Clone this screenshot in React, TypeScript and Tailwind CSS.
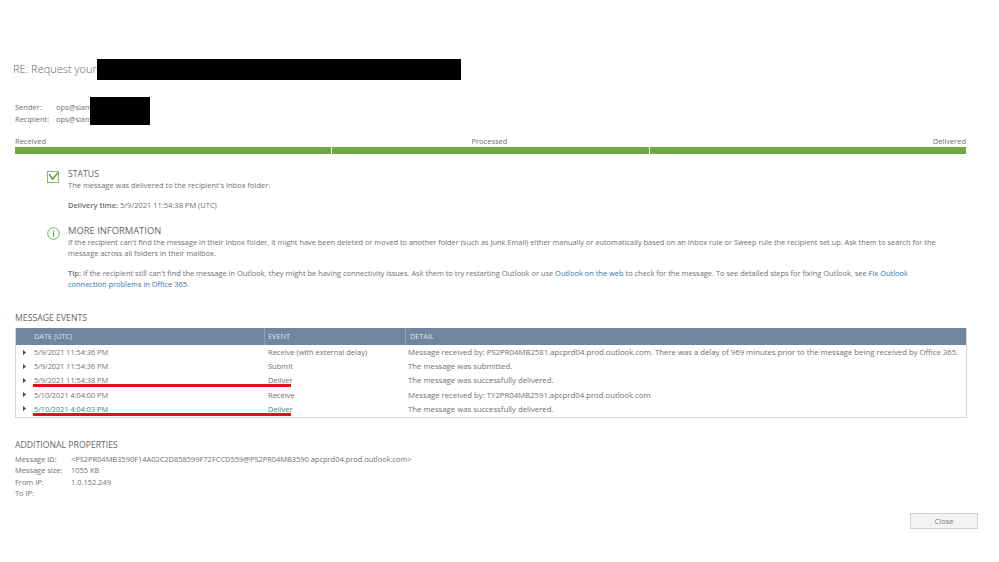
const font = { fontFamily: "'Open Sans', sans-serif" };

const events = [
  ["5/9/2021 11:54:36 PM", "Receive (with external delay)", "Message received by: PS2PR04MB2581.apcprd04.prod.outlook.com. There was a delay of 969 minutes prior to the message being received by Office 365.", false],
  ["5/9/2021 11:54:36 PM", "Submit", "The message was submitted.", false],
  ["5/9/2021 11:54:38 PM", "Deliver", "The message was successfully delivered.", true],
  ["5/10/2021 4:04:00 PM", "Receive", "Message received by: TY2PR04MB2591.apcprd04.prod.outlook.com", false],
  ["5/10/2021 4:04:03 PM", "Deliver", "The message was successfully delivered.", true],
] as const;

const props = [
  ["Message ID:", "<PS2PR04MB3590F14A02C2D858599F72FCCD559@PS2PR04MB3590.apcprd04.prod.outlook.com>"],
  ["Message size:", "1055 KB"],
  ["From IP:", "1.0.152.249"],
  ["To IP:", ""],
];

function CheckIcon() {
  return (
    <svg width="12" height="12" viewBox="0 0 12 12" fill="none" className="shrink-0">
      <rect x="0.5" y="0.5" width="11" height="11" stroke="#7db663" strokeWidth="0.9" />
      <path d="M2.2 3.2 L5.6 8.2 L11 1.6" stroke="#4f9a3a" strokeWidth="1.5" />
    </svg>
  );
}

function InfoIcon() {
  return (
    <svg width="13" height="13" viewBox="0 0 13 13" fill="none" className="shrink-0">
      <circle cx="6.5" cy="6.5" r="5.8" stroke="#6fae50" strokeWidth="1" />
      <rect x="6" y="5.6" width="1.1" height="4" fill="#4f9a3a" />
      <rect x="6" y="3.4" width="1.1" height="1.2" fill="#4f9a3a" />
    </svg>
  );
}

export default function App() {
  return (
    <div className="relative h-[562px] w-[999px] overflow-hidden bg-white pl-[15px] pr-[32px] pt-[59px] text-[7.5px] text-[#707070]" style={font}>
      <div className="-ml-[2px] flex h-[21px] items-center text-[11px] font-light text-[#666]">
        <span className="w-[84px] whitespace-nowrap">RE: Request your</span>
        <div className="h-[21px] w-[364px] bg-black" />
      </div>

      <div className="relative mt-[21px] leading-[12px]">
        <div className="flex h-[12px]">
          <span className="w-[41px]">Sender:</span>
          <span>ops@siam</span>
        </div>
        <div className="flex h-[12px]">
          <span className="w-[41px]">Recipient:</span>
          <span>ops@siam</span>
        </div>
        <div className="absolute left-[75px] top-[-4px] h-[28px] w-[60px] bg-black" />
      </div>

      <div className="mt-[11px] flex h-[10px] w-[951px] items-center justify-between leading-[10px]">
        <span>Received</span>
        <span>Processed</span>
        <span>Delivered</span>
      </div>
      <div className="mt-[1px] flex h-[7px] w-[951px] gap-px">
        <div className="flex-1 bg-[#6aa944]" />
        <div className="flex-1 bg-[#6aa944]" />
        <div className="flex-1 bg-[#6aa944]" />
      </div>

      <div className="mt-[14px] flex gap-[9px] pl-[32px]">
        <div className="pt-[3px]"><CheckIcon /></div>
        <div>
          <div className="h-[12px] text-[8.7px] leading-[12px] text-[#666]">STATUS</div>
          <div className="h-[11px] leading-[11px]">The message was delivered to the recipient's Inbox folder.</div>
          <div className="mt-[9px] h-[11px] leading-[11px]">
            <span className="font-semibold">Delivery time:</span> 5/9/2021 11:54:38 PM (UTC)
          </div>
        </div>
      </div>

      <div className="mt-[14px] flex gap-[8px] pl-[32px]">
        <div className="pt-[2px]"><InfoIcon /></div>
        <div className="w-[871px] text-[7.4px]">
          <div className="h-[12px] text-[9.4px] leading-[12px] text-[#666]">MORE INFORMATION</div>
          <p className="leading-[11px]">
            If the recipient can't find the message in their Inbox folder, it might have been deleted or moved to another folder (such as Junk Email) either manually or automatically based on an Inbox rule or Sweep rule the recipient set up. Ask them to search for the message across all folders in their mailbox.
          </p>
          <p className="mt-[9px] text-[7.45px] leading-[11px]">
            <span className="font-semibold">Tip:</span> If the recipient still can't find the message in Outlook, they might be having connectivity issues. Ask them to try restarting Outlook or use{" "}
            <span className="text-[#2f75b0]">Outlook on the web</span> to check for the message. To see detailed steps for fixing Outlook, see{" "}
            <span className="text-[#2f75b0]">Fix Outlook connection problems in Office 365.</span>
          </p>
        </div>
      </div>

      <div className="mt-[22px] h-[13px] text-[8.7px] leading-[13px] text-[#666]">MESSAGE EVENTS</div>
      <div className="mt-[3px] w-[952px] border-b border-l border-r border-[#d4d4d4]">
        <div className="flex h-[17px] bg-[#6f86a0] text-[7.3px] leading-[17px] text-[#dfe5ec]">
          <div className="w-[249px] border-r border-[#8fa2b6] pl-[18px]">DATE (UTC)</div>
          <div className="w-[141px] border-r border-[#8fa2b6] pl-[3px]">EVENT</div>
          <div className="flex-1 pl-[4px]">DETAIL</div>
        </div>
        <div className="pb-[1px]">
          {events.map(([date, event, detail, marked]) => (
            <div key={date} className="relative flex h-[14.2px] items-center leading-[14px]">
              <svg width="3" height="5" viewBox="0 0 3 5" className="ml-[7px] mr-[8px] shrink-0">
                <path d="M0 0 L3 2.5 L0 5 Z" fill="#444" />
              </svg>
              <span className="w-[232px] shrink-0 text-[7.3px]">{date}</span>
              <span className="w-[140px] shrink-0 pl-[2px]">{event}</span>
              <span className="whitespace-nowrap pl-[2px] text-[7.75px]">{detail}</span>
              {marked && <div className="absolute left-[17px] top-[11px] h-[3px] w-[258px] bg-[#e3101c]" />}
            </div>
          ))}
        </div>
      </div>

      <div className="mt-[21px] h-[13px] text-[8.7px] leading-[13px] text-[#666]">ADDITIONAL PROPERTIES</div>
      <div className="mt-[2px] text-[7.45px]">
        {props.map(([label, value]) => (
          <div key={label} className="flex h-[11.4px] leading-[11.4px]">
            <span className="w-[56px] shrink-0">{label}</span>
            <span className="whitespace-nowrap">{value}</span>
          </div>
        ))}
      </div>

      <div className="mt-[13px] flex w-[952px] justify-end">
        <button className="-mr-[11px] h-[16px] w-[68px] border border-[#cfcfcf] bg-[#f3f3f3] text-[7.5px] leading-[14px] text-[#777]">Close</button>
      </div>
    </div>
  );
}
